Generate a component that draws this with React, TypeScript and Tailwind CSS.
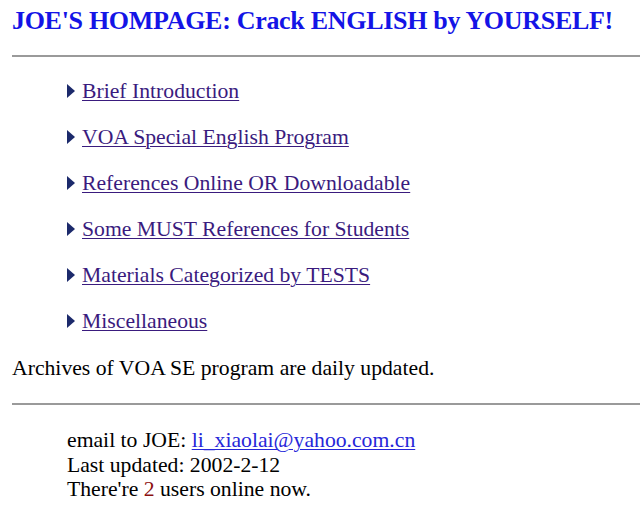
const links = [
  'Brief Introduction',
  'VOA Special English Program',
  'References Online OR Downloadable',
  'Some MUST References for Students',
  'Materials Categorized by TESTS',
  'Miscellaneous',
];

function Arrow() {
  return (
    <svg width="8" height="14" viewBox="0 0 8 14" className="mr-[7px] shrink-0">
      <path d="M0 0 L8 7 L0 14 Z" fill="#1c2a6b" />
    </svg>
  );
}

export default function App() {
  return (
    <div className="min-h-screen bg-white pl-[12px] font-['Liberation_Serif',serif] text-black">
      <h1 className="whitespace-nowrap pt-[4px] text-[26px] font-bold leading-[34px] tracking-[-0.3px] text-[#1414e6]">
        JOE'S HOMPAGE: Crack ENGLISH by YOURSELF!
      </h1>
      <hr className="mt-[17px] border-t-2 border-[#9a9a9a]" />

      <ul className="mt-[22px] flex flex-col gap-[22px] pl-[55px]">
        {links.map((l) => (
          <li key={l} className="flex items-center text-[21.7px] leading-[24px]">
            <Arrow />
            <a href="#" className="text-[#3a1b7e] underline decoration-1 underline-offset-2">
              {l}
            </a>
          </li>
        ))}
      </ul>

      <p className="mt-[23px] text-[21.7px] leading-[24px]">
        Archives of VOA SE program are daily updated.
      </p>
      <hr className="mt-[23px] border-t-2 border-[#9a9a9a]" />

      <div className="mt-[23px] pl-[55px] text-[21.7px] leading-[24.5px]">
        <div>
          email to JOE:{' '}
          <a href="#" className="text-[#2626d9] underline decoration-1 underline-offset-2">
            li_xiaolai@yahoo.com.cn
          </a>
        </div>
        <div>Last updated: 2002-2-12</div>
        <div>
          There're <span className="text-[#8b1010]">2</span> users online now.
        </div>
      </div>
    </div>
  );
}
